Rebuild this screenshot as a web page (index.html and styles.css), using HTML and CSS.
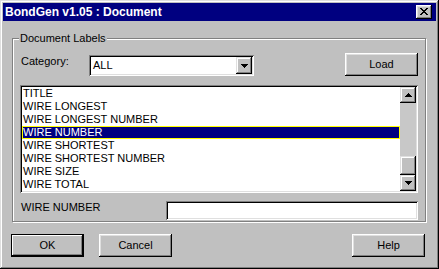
FILE: index.html
```html
<!DOCTYPE html>
<html lang="en">
<head>
  <meta charset="UTF-8" />
  <title>BondGen v1.05 : Document</title>
  <link rel="stylesheet" href="styles.css">
</head>
<body>
  <div class="window">
    <div class="titlebar">
      <span class="title">BondGen v1.05 : Document</span>
      <div class="close-btn">
        <svg width="8" height="7" viewBox="0 0 8 7" shape-rendering="crispEdges">
          <path d="M0 0h2v1H0zM6 0h2v1H6zM1 1h2v1H1zM5 1h2v1H5zM2 2h4v1H2zM3 3h2v1H3zM2 4h4v1H2zM1 5h2v1H1zM5 5h2v1H5zM0 6h2v1H0zM6 6h2v1H6z" fill="#000"/>
        </svg>
      </div>
    </div>

    <div class="body">
      <div class="group">
        <span class="group-title">Document Labels</span>

        <div class="row row-category">
          <span class="field-label label-category">Category:</span>
          <div class="combo">
            <span class="combo-value">ALL</span>
            <div class="combo-btn">
              <svg width="7" height="4" viewBox="0 0 7 4" shape-rendering="crispEdges">
                <path d="M0 0h7v1H0zM1 1h5v1H1zM2 2h3v1H2zM3 3h1v1H3z" fill="#000"/>
              </svg>
            </div>
          </div>
          <div class="btn btn-load">Load</div>
        </div>

        <div class="listbox">
          <div class="list-items">
            <div class="item">TITLE</div>
            <div class="item">WIRE LONGEST</div>
            <div class="item">WIRE LONGEST NUMBER</div>
            <div class="item selected">WIRE NUMBER</div>
            <div class="item">WIRE SHORTEST</div>
            <div class="item">WIRE SHORTEST NUMBER</div>
            <div class="item">WIRE SIZE</div>
            <div class="item">WIRE TOTAL</div>
          </div>
          <div class="scrollbar">
            <div class="sb-btn">
              <svg width="7" height="4" viewBox="0 0 7 4" shape-rendering="crispEdges">
                <path d="M3 0h1v1H3zM2 1h3v1H2zM1 2h5v1H1zM0 3h7v1H0z" fill="#000"/>
              </svg>
            </div>
            <div class="sb-track">
              <div class="sb-thumb"></div>
            </div>
            <div class="sb-btn">
              <svg width="7" height="4" viewBox="0 0 7 4" shape-rendering="crispEdges">
                <path d="M0 0h7v1H0zM1 1h5v1H1zM2 2h3v1H2zM3 3h1v1H3z" fill="#000"/>
              </svg>
            </div>
          </div>
        </div>

        <div class="row row-edit">
          <span class="field-label label-edit">WIRE NUMBER</span>
          <div class="edit"></div>
        </div>
      </div>

      <div class="buttons">
        <div class="btn btn-default">OK</div>
        <div class="btn btn-cancel">Cancel</div>
        <div class="btn btn-help">Help</div>
      </div>
    </div>
  </div>
</body>
</html>
```

FILE: styles.css
```css
* { box-sizing: border-box; margin: 0; padding: 0; }
body {
  font-family: 'Liberation Sans', Arial, sans-serif;
  font-size: 11px;
  line-height: 13px;
  color: #000;
  background: #c0c0c0;
}
.window {
  width: 439px;
  height: 269px;
  padding: 3px;
  background: #c0c0c0;
  box-shadow: inset -1px -1px 0 #000, inset 1px 1px 0 #dfdfdf,
              inset -2px -2px 0 #808080, inset 2px 2px 0 #fff;
  display: flex;
  flex-direction: column;
}
.titlebar {
  height: 18px;
  background: #000080;
  color: #fff;
  display: flex;
  align-items: center;
  justify-content: space-between;
  padding: 0 4px 0 2px;
}
.title {
  font-weight: bold;
  font-size: 12px;
  line-height: 18px;
}
.close-btn {
  width: 16px;
  height: 14px;
  background: #c0c0c0;
  box-shadow: inset -1px -1px 0 #000, inset 1px 1px 0 #fff,
              inset -2px -2px 0 #808080, inset 2px 2px 0 #dfdfdf;
  display: flex;
  align-items: center;
  justify-content: center;
  padding-bottom: 1px;
}
.close-btn svg { display: block; }

.body {
  flex: 1;
  padding: 17px 10px 0 9px;
  display: flex;
  flex-direction: column;
}
.group {
  position: relative;
  height: 184px;
  border: 1px solid #808080;
  box-shadow: 1px 1px 0 #fff, inset 1px 1px 0 #fff;
  padding: 14px 7px 0 7px;
}
.group-title {
  position: absolute;
  left: 6px;
  top: -7px;
  padding: 0 1px;
  background: #c0c0c0;
}

.row {
  display: flex;
}
.row-category {
  height: 23px;
}
.field-label {
  flex-shrink: 0;
  padding-left: 1px;
}
.label-category {
  width: 69px;
  margin-top: 2px;
}
.label-edit {
  width: 146px;
}

.combo {
  width: 165px;
  height: 21px;
  align-self: flex-end;
  background: #fff;
  box-shadow: inset 1px 1px 0 #808080, inset -1px -1px 0 #fff,
              inset 2px 2px 0 #000, inset -2px -2px 0 #dfdfdf;
  padding: 2px;
  display: flex;
}
.combo-value {
  flex: 1;
  padding: 2px 0 0 2px;
}
.combo-btn {
  width: 16px;
  height: 17px;
  background: #c0c0c0;
  box-shadow: inset -1px -1px 0 #000, inset 1px 1px 0 #dfdfdf,
              inset -2px -2px 0 #808080, inset 2px 2px 0 #fff;
  display: flex;
  align-items: center;
  justify-content: center;
}
.combo-btn svg, .sb-btn svg { display: block; }

.btn {
  width: 73px;
  height: 23px;
  background: #c0c0c0;
  box-shadow: inset -1px -1px 0 #000, inset 1px 1px 0 #fff,
              inset -2px -2px 0 #808080, inset 2px 2px 0 #dfdfdf;
  display: flex;
  align-items: center;
  justify-content: center;
}
.btn-load {
  margin-left: auto;
}
.btn-default {
  box-shadow: inset 0 0 0 1px #000,
              inset -2px -2px 0 #000, inset 2px 2px 0 #fff,
              inset -3px -3px 0 #808080;
}

.listbox {
  margin-top: 9px;
  height: 108px;
  background: #fff;
  box-shadow: inset 1px 1px 0 #808080, inset -1px -1px 0 #fff,
              inset 2px 2px 0 #000, inset -2px -2px 0 #dfdfdf;
  padding: 2px;
  display: flex;
}
.list-items {
  flex: 1;
}
.item {
  height: 13px;
  padding-left: 1px;
  white-space: nowrap;
}
.item.selected {
  background: #000080;
  color: #fff;
  box-shadow: inset 0 0 0 1px #ffff00;
}
.scrollbar {
  width: 16px;
  display: flex;
  flex-direction: column;
}
.sb-btn {
  height: 16px;
  background: #c0c0c0;
  box-shadow: inset -1px -1px 0 #000, inset 1px 1px 0 #dfdfdf,
              inset -2px -2px 0 #808080, inset 2px 2px 0 #fff;
  display: flex;
  align-items: center;
  justify-content: center;
}
.sb-track {
  flex: 1;
  background: #c8c8c8;
  display: flex;
  flex-direction: column;
  justify-content: flex-end;
}
.sb-thumb {
  height: 19px;
  background: #c0c0c0;
  box-shadow: inset -1px -1px 0 #000, inset 1px 1px 0 #dfdfdf,
              inset -2px -2px 0 #808080, inset 2px 2px 0 #fff;
}

.row-edit {
  margin-top: 8px;
}
.edit {
  flex: 1;
  height: 19px;
  background: #fff;
  box-shadow: inset 1px 1px 0 #808080, inset -1px -1px 0 #fff,
              inset 2px 2px 0 #000, inset -2px -2px 0 #dfdfdf;
}

.buttons {
  display: flex;
  margin: 12px 1px 0 -1px;
}
.btn-cancel {
  margin-left: 15px;
}
.btn-help {
  margin-left: auto;
}
```
